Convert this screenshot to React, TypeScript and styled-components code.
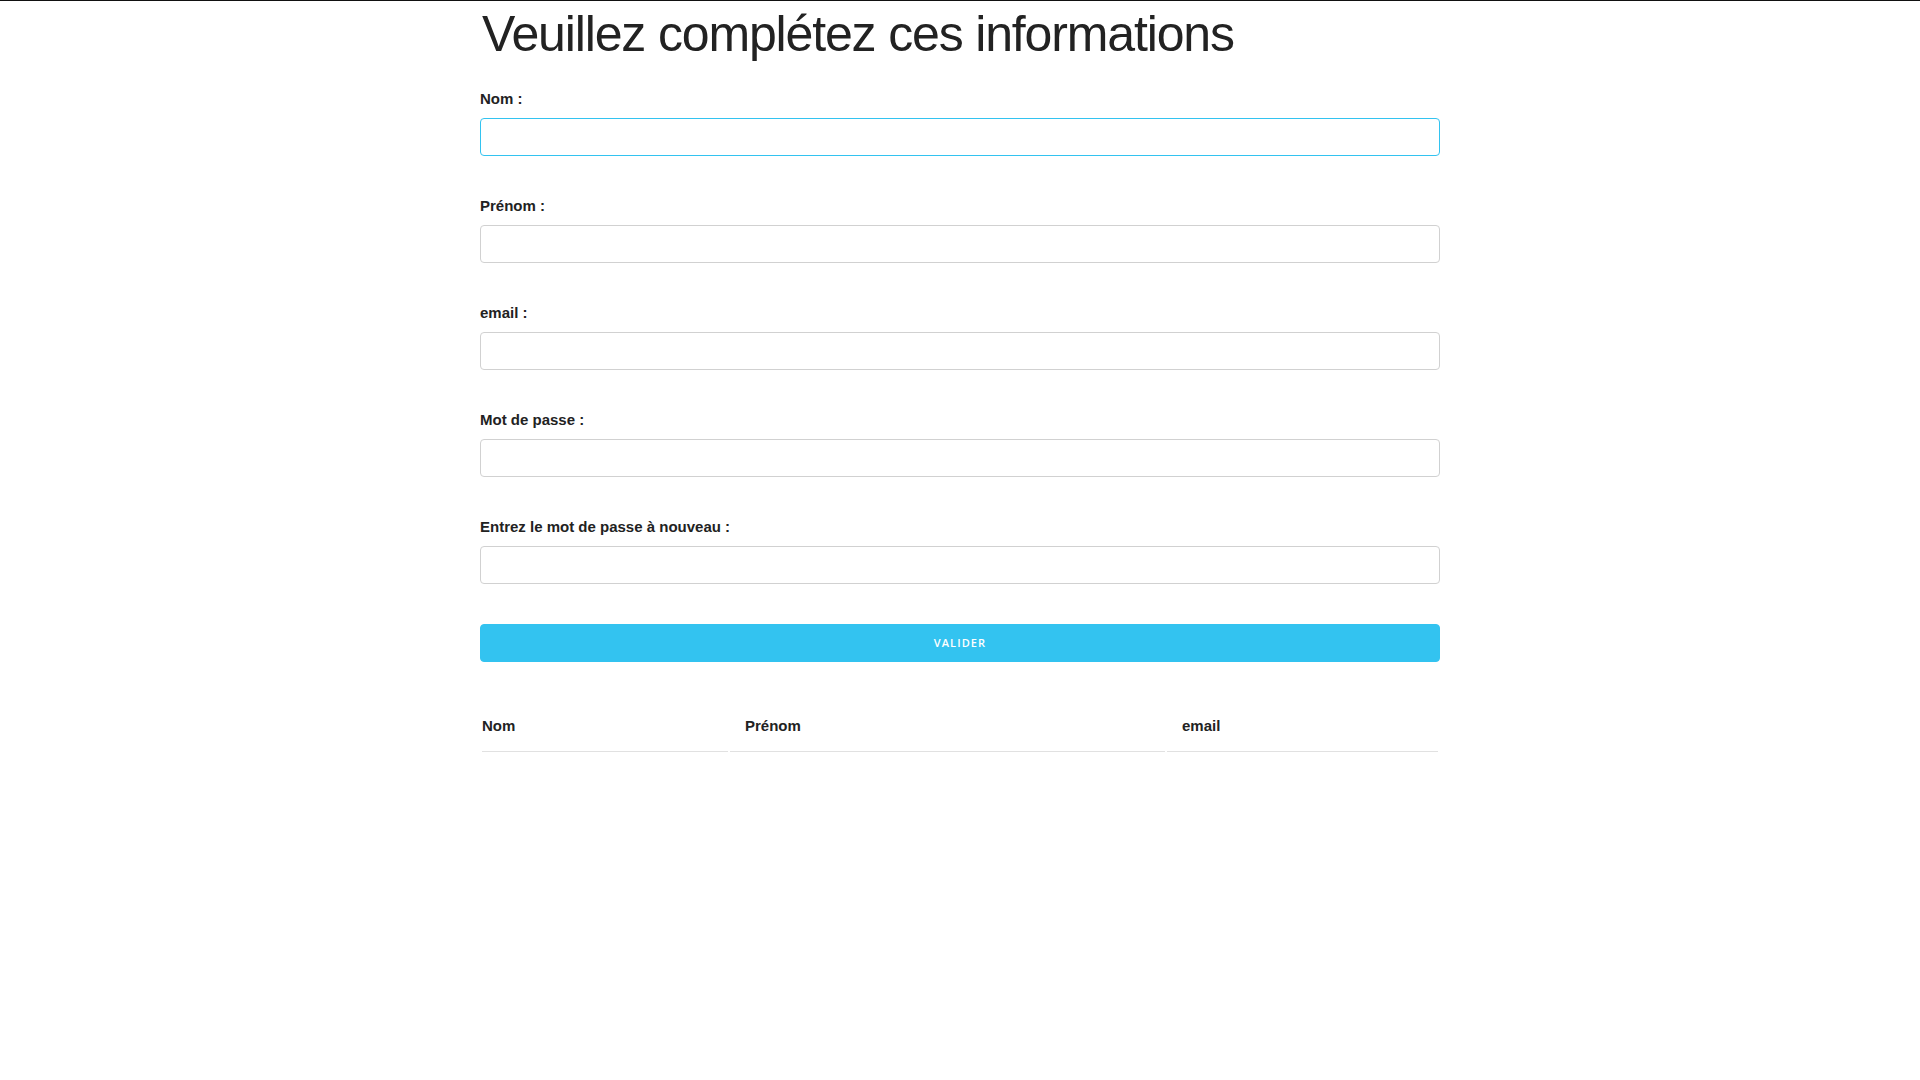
import styled, { createGlobalStyle } from 'styled-components';

const GlobalStyle = createGlobalStyle`
  *, *::before, *::after {
    box-sizing: border-box;
  }
  html, body {
    margin: 0;
    padding: 0;
    background: #fff;
  }
  body {
    font-family: 'Liberation Sans', Arial, Helvetica, sans-serif;
    font-size: 15px;
    line-height: 1.6;
    color: #222;
  }
`;

const Page = styled.div`
  min-height: 100vh;
  border-top: 1px solid #111;
  padding-top: 3px;
`;

const Container = styled.div`
  width: 960px;
  margin: 0 auto;
`;

const Title = styled.h1`
  margin: 0 0 23px 2px;
  font-size: 50px;
  line-height: 60px;
  font-weight: 300;
  letter-spacing: -1.15px;
  color: #222;
`;

const Form = styled.form`
  display: flex;
  flex-direction: column;
  gap: 38px;
`;

const Field = styled.div`
  display: flex;
  flex-direction: column;
`;

const Label = styled.label`
  display: block;
  margin-bottom: 7px;
  font-size: 15px;
  line-height: 24px;
  font-weight: 700;
  color: #222;
`;

const Input = styled.input<{ $active?: boolean }>`
  width: 100%;
  height: 38px;
  padding: 6px 10px;
  font-family: 'Liberation Sans', Arial, sans-serif;
  font-size: 15px;
  color: #222;
  caret-color: #111;
  background: #fff;
  border: 1px solid ${(props) => (props.$active ? '#33c3f0' : '#d1d1d1')};
  border-radius: 4px;
  outline: 0;
  box-shadow: none;
  &:focus {
    border-color: #33c3f0;
  }
`;

const SubmitButton = styled.button`
  display: block;
  width: 100%;
  height: 38px;
  margin-top: 2px;
  padding: 0 30px;
  font-family: 'Open Sans', 'Liberation Sans', sans-serif;
  font-size: 11px;
  font-weight: 600;
  line-height: 36px;
  letter-spacing: 1.1px;
  text-transform: uppercase;
  color: #fff;
  background: #33c3f0;
  border: 1px solid #33c3f0;
  border-radius: 4px;
  cursor: pointer;
`;

const Table = styled.table`
  width: 960px;
  margin-top: 38px;
  border-collapse: separate;
  border-spacing: 2px;
  table-layout: fixed;
`;

const Th = styled.th<{ $w: number; $first?: boolean }>`
  width: ${(props) => props.$w}px;
  padding: 12px 15px 13px;
  padding-left: ${(props) => (props.$first ? 0 : 15)}px;
  text-align: left;
  font-size: 15px;
  line-height: 24px;
  font-weight: 700;
  color: #222;
  border-bottom: 1px solid #e1e1e1;
`;

const fields = [
  { id: 'nom', label: 'Nom :', type: 'text' },
  { id: 'prenom', label: 'Prénom :', type: 'text' },
  { id: 'email', label: 'email :', type: 'email' },
  { id: 'mdp', label: 'Mot de passe :', type: 'password' },
  { id: 'mdp2', label: 'Entrez le mot de passe à nouveau :', type: 'password' },
];

function App() {
  return (
    <Page>
      <GlobalStyle />
      <Container>
        <Title>Veuillez complétez ces informations</Title>
        <Form onSubmit={(e) => e.preventDefault()}>
          {fields.map((f, i) => (
            <Field key={f.id}>
              <Label htmlFor={f.id}>{f.label}</Label>
              <Input id={f.id} type={f.type} $active={i === 0} autoFocus={i === 0} />
            </Field>
          ))}
          <SubmitButton type="submit">Valider</SubmitButton>
        </Form>
        <Table>
          <thead>
            <tr>
              <Th $w={246} $first>
                Nom
              </Th>
              <Th $w={435}>Prénom</Th>
              <Th $w={271}>email</Th>
            </tr>
          </thead>
        </Table>
      </Container>
    </Page>
  );
}

export default App;
